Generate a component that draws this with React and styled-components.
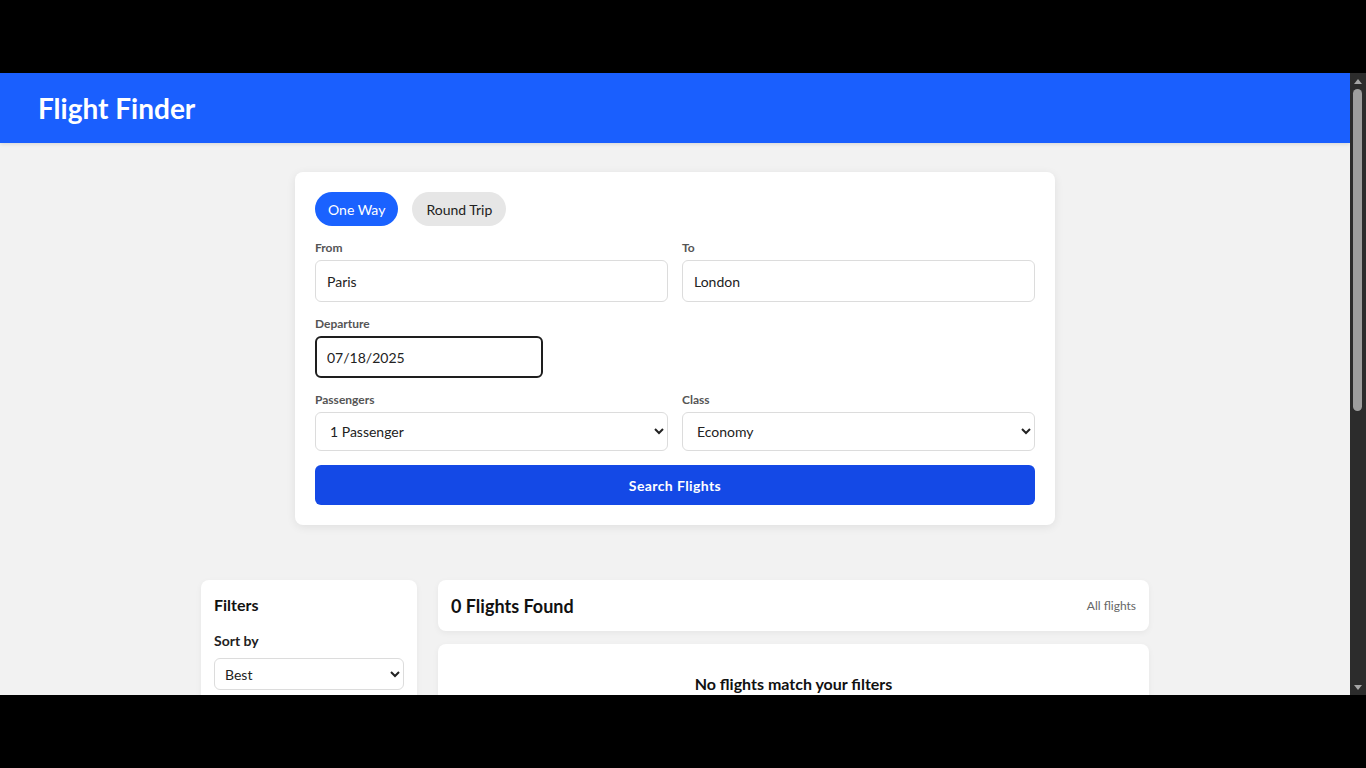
import React, { useState } from "react";
import styled, { createGlobalStyle, css } from "styled-components";

const GlobalStyle = createGlobalStyle`
  html, body {
    margin: 0;
    padding: 0;
    background: #000;
    overflow: hidden;
  }
  * {
    box-sizing: border-box;
  }
`;

const font = `Lato, "Noto Sans", "Liberation Sans", sans-serif`;

const Frame = styled.div`
  width: 1366px;
  height: 768px;
  background: #000;
  padding: 73px 0;
  font-family: ${font};
`;

const Window = styled.div`
  height: 622px;
  display: flex;
`;

const Viewport = styled.div`
  flex: 1;
  overflow: hidden;
  background: #f2f2f2;
`;

const Scrollbar = styled.div`
  width: 16px;
  background: #2c2c2c;
  display: flex;
  flex-direction: column;
  align-items: center;
`;

const ScrollArrow = styled.div`
  height: 16px;
  width: 16px;
  display: flex;
  align-items: center;
  justify-content: center;
`;

const Track = styled.div`
  flex: 1;
  width: 100%;
  padding: 0 4px 0 2px;
`;

const Thumb = styled.div`
  height: 322px;
  width: 9px;
  margin-left: 1px;
  background: #9e9e9e;
  border-radius: 5px;
`;

const Page = styled.div`
  padding-bottom: 40px;
`;

const Header = styled.header`
  height: 70px;
  background: #1a5ffe;
  display: flex;
  align-items: center;
  padding: 0 38px;
  box-shadow: 0 1px 4px rgba(0, 0, 0, 0.12);

  h1 {
    margin: 0;
    color: #fff;
    font-size: 28px;
    font-weight: 700;
  }
`;

const SearchCard = styled.section`
  width: 760px;
  margin: 29px auto 0;
  background: #fff;
  border-radius: 8px;
  box-shadow: 0 2px 10px rgba(0, 0, 0, 0.08);
  padding: 20px;
  display: flex;
  flex-direction: column;
  gap: 14px;
`;

const TripToggle = styled.div`
  display: flex;
  gap: 14px;
`;

const Pill = styled.button`
  height: 34px;
  padding: 0 ${(p) => (p.active ? "13px" : "14px")};
  border: none;
  border-radius: 17px;
  font-family: ${font};
  font-size: 14px;
  cursor: pointer;
  background: ${(p) => (p.active ? "#1a62ff" : "#e6e6e6")};
  color: ${(p) => (p.active ? "#fff" : "#222")};
`;

const Row = styled.div`
  display: grid;
  grid-template-columns: ${(p) => p.cols || "1fr 1fr"};
  gap: 14px;
`;

const Field = styled.label`
  display: flex;
  flex-direction: column;
  gap: 5px;
`;

const Label = styled.span`
  font-size: 12px;
  line-height: 15px;
  font-weight: 700;
  color: #555;
`;

const inputBase = css`
  width: 100%;
  font-family: ${font};
  font-size: 14px;
  color: #222;
  background: #fff;
  border: 1px solid #dcdcdc;
  border-radius: 6px;
  outline: none;
`;

const TextInput = styled.input`
  ${inputBase}
  height: 42px;
  padding: 0 11px;
  ${(p) =>
    p.focused &&
    css`
      border: 2px solid #1e1e1e;
      padding: 0 10px;
    `}
`;

const Select = styled.select`
  ${inputBase}
  height: ${(p) => (p.compact ? "32px" : "39px")};
  padding: 0 ${(p) => (p.compact ? "6px" : "10px")};
`;

const SearchButton = styled.button`
  height: 40px;
  border: none;
  border-radius: 6px;
  background: #1449e6;
  color: #fff;
  font-family: ${font};
  font-size: 14px;
  letter-spacing: 0.4px;
  font-weight: 700;
  cursor: pointer;
`;

const Results = styled.div`
  width: 948px;
  margin: 55px auto 0;
  display: grid;
  grid-template-columns: 216px 1fr;
  gap: 21px;
  align-items: start;
`;

const Card = styled.div`
  background: #fff;
  border-radius: 8px;
  box-shadow: 0 2px 6px rgba(0, 0, 0, 0.05);
`;

const FilterCard = styled(Card)`
  padding: 14px 13px 20px;
  display: flex;
  flex-direction: column;
`;

const FilterTitle = styled.h2`
  margin: 0 0 16px;
  font-size: 16px;
  line-height: 22px;
  font-weight: 700;
  color: #111;
`;

const FilterGroup = styled.div`
  display: flex;
  flex-direction: column;
  gap: 8px;
`;

const GroupLabel = styled.span`
  font-size: 14px;
  line-height: 18px;
  font-weight: 700;
  color: #222;
`;

const MainColumn = styled.div`
  display: flex;
  flex-direction: column;
  gap: 13px;
`;

const ResultsHeader = styled(Card)`
  height: 51px;
  padding: 0 13px;
  display: flex;
  align-items: center;
  justify-content: space-between;

  h3 {
    margin: 0;
    font-size: 18px;
    font-weight: 700;
    color: #111;
  }
  span {
    font-size: 12px;
    color: #666;
  }
`;

const EmptyState = styled(Card)`
  padding: 30px 20px 40px;
  text-align: center;

  h4 {
    margin: 0;
    font-size: 16px;
    line-height: 20px;
    font-weight: 700;
    color: #111;
  }
`;

const Arrow = ({ down }) => (
  <svg width="8" height="5" viewBox="0 0 8 5">
    <path d={down ? "M0 0 H8 L4 5 Z" : "M0 5 H8 L4 0 Z"} fill="#a5a5a5" />
  </svg>
);

export default function App() {
  const [trip, setTrip] = useState("one");

  return (
    <Frame>
      <GlobalStyle />
      <Window>
        <Viewport>
          <Page>
            <Header>
              <h1>Flight Finder</h1>
            </Header>

            <SearchCard>
              <TripToggle>
                <Pill active={trip === "one"} onClick={() => setTrip("one")}>
                  One Way
                </Pill>
                <Pill active={trip === "round"} onClick={() => setTrip("round")}>
                  Round Trip
                </Pill>
              </TripToggle>

              <Row>
                <Field>
                  <Label>From</Label>
                  <TextInput defaultValue="Paris" />
                </Field>
                <Field>
                  <Label>To</Label>
                  <TextInput defaultValue="London" />
                </Field>
              </Row>

              <Row cols="228px 1fr">
                <Field>
                  <Label>Departure</Label>
                  <TextInput focused defaultValue="07/18/2025" />
                </Field>
              </Row>

              <Row>
                <Field>
                  <Label>Passengers</Label>
                  <Select defaultValue="1">
                    <option value="1">1 Passenger</option>
                    <option value="2">2 Passengers</option>
                    <option value="3">3 Passengers</option>
                    <option value="4">4 Passengers</option>
                  </Select>
                </Field>
                <Field>
                  <Label>Class</Label>
                  <Select defaultValue="economy">
                    <option value="economy">Economy</option>
                    <option value="premium">Premium Economy</option>
                    <option value="business">Business</option>
                    <option value="first">First</option>
                  </Select>
                </Field>
              </Row>

              <SearchButton>Search Flights</SearchButton>
            </SearchCard>

            <Results>
              <FilterCard>
                <FilterTitle>Filters</FilterTitle>
                <FilterGroup>
                  <GroupLabel>Sort by</GroupLabel>
                  <Select compact defaultValue="best">
                    <option value="best">Best</option>
                    <option value="cheapest">Cheapest</option>
                    <option value="fastest">Fastest</option>
                  </Select>
                </FilterGroup>
              </FilterCard>

              <MainColumn>
                <ResultsHeader>
                  <h3>0 Flights Found</h3>
                  <span>All flights</span>
                </ResultsHeader>
                <EmptyState>
                  <h4>No flights match your filters</h4>
                </EmptyState>
              </MainColumn>
            </Results>
          </Page>
        </Viewport>

        <Scrollbar>
          <ScrollArrow>
            <Arrow />
          </ScrollArrow>
          <Track>
            <Thumb />
          </Track>
          <ScrollArrow>
            <Arrow down />
          </ScrollArrow>
        </Scrollbar>
      </Window>
    </Frame>
  );
}
